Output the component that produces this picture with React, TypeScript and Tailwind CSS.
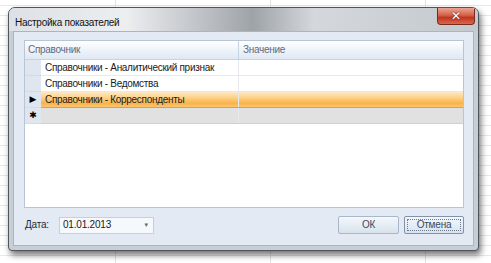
import { ReactNode } from 'react'

const font = { fontFamily: '"Liberation Sans", "DejaVu Sans", sans-serif' }

const rows = [
  { name: 'Справочники - Аналитический признак', value: '' },
  { name: 'Справочники - Ведомства', value: '' },
  { name: 'Справочники - Корреспонденты', value: '', selected: true },
]

function Row({ indicator, children, selected, isNew }: { indicator?: ReactNode; children?: ReactNode; selected?: boolean; isNew?: boolean }) {
  const body = selected
    ? 'bg-[linear-gradient(to_bottom,#fde9c4_0%,#fdd38c_35%,#fbb24a_75%,#fcc76f_100%)] border-b border-[#d9a04a]'
    : isNew
      ? 'bg-[#e1e1e1] border-b border-[#d0d0d0]'
      : 'bg-white border-b border-[#e6e9ed]'
  return (
    <div className="flex h-[16px]">
      <div className="w-[16px] shrink-0 bg-[#dfe6ef] border-b border-[#d2dbe6] flex items-center justify-center text-[9px] text-black">
        {indicator}
      </div>
      <div className={`flex flex-1 ${body}`}>
        <div className="w-[197px] shrink-0 pl-[4px] flex items-center whitespace-nowrap text-[10px] tracking-[-0.3px] text-[#1b1b1b] leading-none">{children}</div>
        <div className="flex-1 border-l border-[#e6e9ed]" />
      </div>
    </div>
  )
}

export default function App() {
  return (
    <div
      className="w-[491px] h-[263px] overflow-hidden bg-white bg-[linear-gradient(to_right,#e2e2e2_1px,transparent_1px),linear-gradient(to_bottom,#e8e8e8_1px,transparent_1px)] bg-[size:155px_10px] bg-[position:115px_5px] pt-[7px] pl-[8px]"
      style={font}
    >
      <div className="w-[471px] h-[244px] flex flex-col rounded-t-[7px] rounded-b-[4px] border border-[#50555c] bg-[#c8ced5] shadow-[2px_4px_6px_rgba(0,0,0,0.55)] overflow-hidden">
        {/* title bar */}
        <div className="h-[23px] shrink-0 flex items-start justify-between bg-[linear-gradient(to_right,#dde1e5_0%,#eceef0_25%,#b3b7bc_45%,#9ea3a8_52%,#d4d8dc_65%,#c4c9ce_100%)]">
          <div className="pl-[6px] pt-[10px] text-[10px] tracking-[-0.25px] leading-none text-[#111] whitespace-nowrap">Настройка показателей</div>
          <div className="mr-[3px] w-[38px] h-[17px] rounded-b-[4px] border border-t-0 border-[#7b2a1e] bg-[linear-gradient(to_bottom,#eaa593_0%,#d5634a_45%,#c0351f_60%,#d86a4e_100%)] flex items-center justify-center">
            <span className="text-white text-[12px] font-bold leading-none [text-shadow:0_0_2px_#5a1408]">✕</span>
          </div>
        </div>
        {/* frame + client */}
        <div className="flex-1 flex px-[4px] pb-[4px]">
          <div className="flex-1 flex flex-col border border-[#a9b5c4] bg-[#e3eaf3] pt-[8px] pl-[10px] pr-[9px]">
            {/* grid */}
            <div className="h-[168px] flex flex-col border border-[#b7c5d6] bg-white">
              <div className="h-[19px] flex bg-[linear-gradient(to_bottom,#ffffff_0%,#eef3f9_50%,#dfe8f3_100%)] border-b border-[#c6d3e3] text-[10px] tracking-[-0.3px] text-[#5e6c80] leading-none">
                <div className="w-[213px] shrink-0 pl-[3px] flex items-center">Справочник</div>
                <div className="flex-1 border-l border-[#c6d3e3] pl-[4px] flex items-center">Значение</div>
              </div>
              {rows.map((r, i) => (
                <Row key={i} selected={r.selected} indicator={r.selected ? '▶' : null}>{r.name}</Row>
              ))}
              <Row isNew indicator={<span className="text-[9px] leading-none">✱</span>} />
              <div className="flex-1 bg-white" />
            </div>
            {/* bottom bar */}
            <div className="flex items-center mt-[8px] h-[18px] text-[10px] tracking-[-0.2px] leading-none">
              <span className="ml-[1px] w-[34px] text-[#1e2a3a]">Дата:</span>
              <div className="w-[95px] h-[17px] border border-[#c4d0de] bg-[#f6f9fc] flex items-center justify-between pl-[3px] pr-[4px] text-[#1b1b1b]">
                <span>01.01.2013</span>
                <span className="text-[6px] text-[#5d6b80]">▼</span>
              </div>
              <div className="flex-1" />
              <div className="w-[61px] h-[18px] rounded-[2px] border border-[#a8b7ca] bg-[linear-gradient(to_bottom,#f4f7fb_0%,#e6edf5_50%,#d9e2ed_100%)] flex items-center justify-center text-[#3a4860]">ОК</div>
              <div className="ml-[5px] w-[60px] h-[18px] rounded-[2px] border border-[#7f93ad] bg-[linear-gradient(to_bottom,#f4f7fb_0%,#e6edf5_50%,#d9e2ed_100%)] p-[2px] flex">
                <div className="flex-1 border border-dotted border-[#6a7890] flex items-center justify-center text-[#3a4860]">Отмена</div>
              </div>
            </div>
          </div>
        </div>
      </div>
    </div>
  )
}
